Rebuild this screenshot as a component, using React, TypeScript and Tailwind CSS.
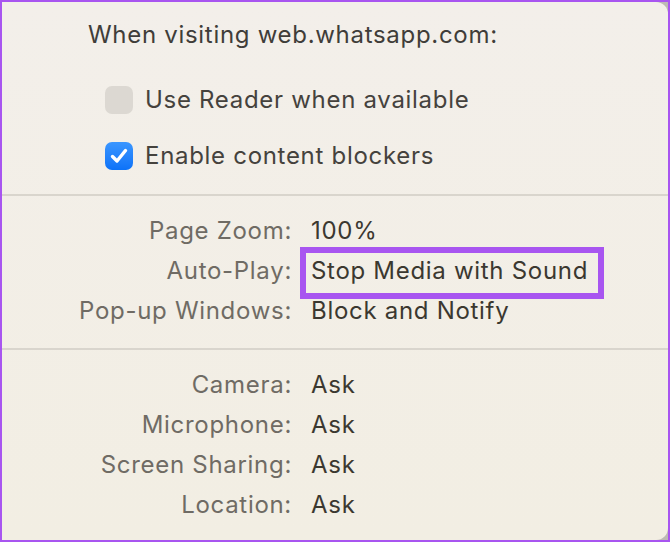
import React from "react";

const font = { fontFamily: "Inter, 'Noto Sans', sans-serif" };

function Row({ label, value, boxed }: { label: string; value: string; boxed?: boolean }) {
  return (
    <div className="flex h-[40px] items-center">
      <div className="w-[290px] shrink-0 text-right text-[#6f6b64]">{label}</div>
      <div className="ml-[19px] text-[#3b3830]">
        {boxed ? (
          <span className="relative inline-block">
            {value}
            <span className="absolute left-[-11px] top-[-6px] h-[52px] w-[304px] border-[6px] border-[#a855f0]" />
          </span>
        ) : (
          value
        )}
      </div>
    </div>
  );
}

export default function App() {
  return (
    <div className="h-[542px] w-[670px] overflow-hidden bg-[#a855f0] p-[2px]" style={font}>
      <div className="h-full w-full bg-[#bdb9b4]">
        <div className="relative h-full w-full rounded-r-[12px] bg-gradient-to-b from-[#f3efea] to-[#f2eee3] pt-[13px] text-[24px] tracking-[0.7px]">
          <div className="h-[40px] pl-[86px] leading-[40px] text-[#403d39]">When visiting web.whatsapp.com:</div>

          <div className="mt-[25px] flex h-[40px] items-center pl-[103px]">
            <div className="h-[28px] w-[28px] rounded-[7px] bg-[#dcd8d2]" />
            <span className="ml-[12px] text-[#45423d]">Use Reader when available</span>
          </div>

          <div className="mt-[16px] flex h-[40px] items-center pl-[103px]">
            <div className="flex h-[28px] w-[28px] items-center justify-center rounded-[7px] bg-gradient-to-b from-[#3a96ff] to-[#0b72f8]">
              <svg width="20" height="20" viewBox="0 0 20 20" fill="none">
                <path d="M3.5 10.5 L8 15 L16.5 4.5" stroke="white" strokeWidth="3.4" strokeLinecap="round" strokeLinejoin="round" />
              </svg>
            </div>
            <span className="ml-[12px] text-[#45423d]">Enable content blockers</span>
          </div>

          <div className="mt-[18px] h-[2px] bg-[#d9d5cd]" />

          <div className="mt-[15px]">
            <Row label="Page Zoom:" value="100%" />
            <Row label="Auto-Play:" value="Stop Media with Sound" boxed />
            <Row label="Pop-up Windows:" value="Block and Notify" />
          </div>

          <div className="mt-[17px] h-[2px] bg-[#d9d5cd]" />

          <div className="mt-[15px]">
            <Row label="Camera:" value="Ask" />
            <Row label="Microphone:" value="Ask" />
            <Row label="Screen Sharing:" value="Ask" />
            <Row label="Location:" value="Ask" />
          </div>
        </div>
      </div>
    </div>
  );
}
